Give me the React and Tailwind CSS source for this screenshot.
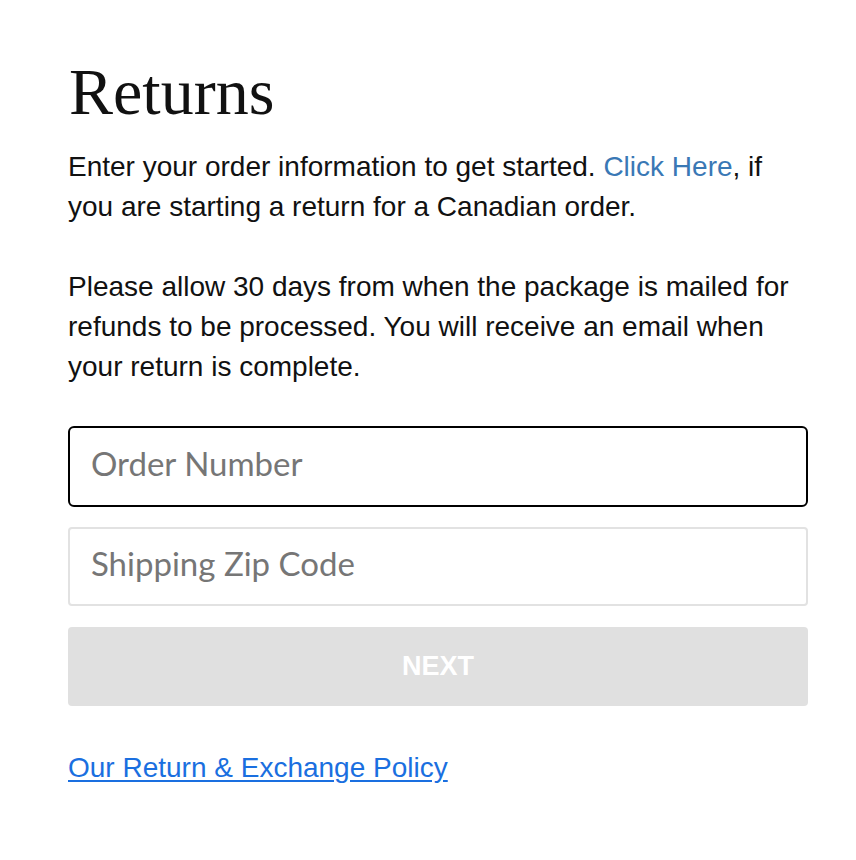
import React from 'react';

export default function App() {
  const sans = { fontFamily: '"Liberation Sans", Arial, sans-serif' };

  return (
    <div className="min-h-[860px] bg-white">
      <div className="w-[740px] ml-[68px] pt-[56px]" style={sans}>
        {/* heading */}
        <h1
          className="text-[66px] leading-[72px] text-[#111] ml-[1px]"
          style={{ fontFamily: '"Liberation Serif", "Times New Roman", serif' }}
        >
          Returns
        </h1>

        {/* intro text */}
        <div className="mt-[19px] text-[28px] leading-[40px] text-[#111]">
          <p>
            Enter your order information to get started.{' '}
            <a href="#" className="text-[#3a78b5]">Click Here</a>, if
            <br />
            you are starting a return for a Canadian order.
          </p>
          <p className="mt-[40px]">
            Please allow 30 days from when the package is mailed for
            <br />
            refunds to be processed. You will receive an email when
            <br />
            your return is complete.
          </p>
        </div>

        {/* form */}
        <form className="mt-[39px] flex flex-col" onSubmit={(e) => e.preventDefault()}>
          <input
            autoFocus
            placeholder="Order Number"
            className="h-[81px] w-full rounded-[6px] border-2 border-black px-[21px] pb-[8px] text-[33px] text-black placeholder-[#767676] outline-none"
            style={{ fontFamily: 'Lato, "Open Sans", sans-serif' }}
          />
          <input
            placeholder="Shipping Zip Code"
            className="mt-[20px] h-[79px] w-full rounded-[4px] border-2 border-[#e2e2e2] px-[21px] pb-[8px] text-[33px] text-black placeholder-[#767676] outline-none"
            style={{ fontFamily: 'Lato, "Open Sans", sans-serif' }}
          />
          <button
            type="submit"
            disabled
            className="mt-[21px] h-[79px] w-full rounded-[4px] bg-[#e0e0e0] text-[27px] font-bold text-white"
          >
            NEXT
          </button>
        </form>

        <a href="#" className="mt-[46px] block w-fit text-[28px] leading-[32px] text-[#1a6fe0] underline underline-offset-[3px]">
          Our Return &amp; Exchange Policy
        </a>
      </div>
    </div>
  );
}
